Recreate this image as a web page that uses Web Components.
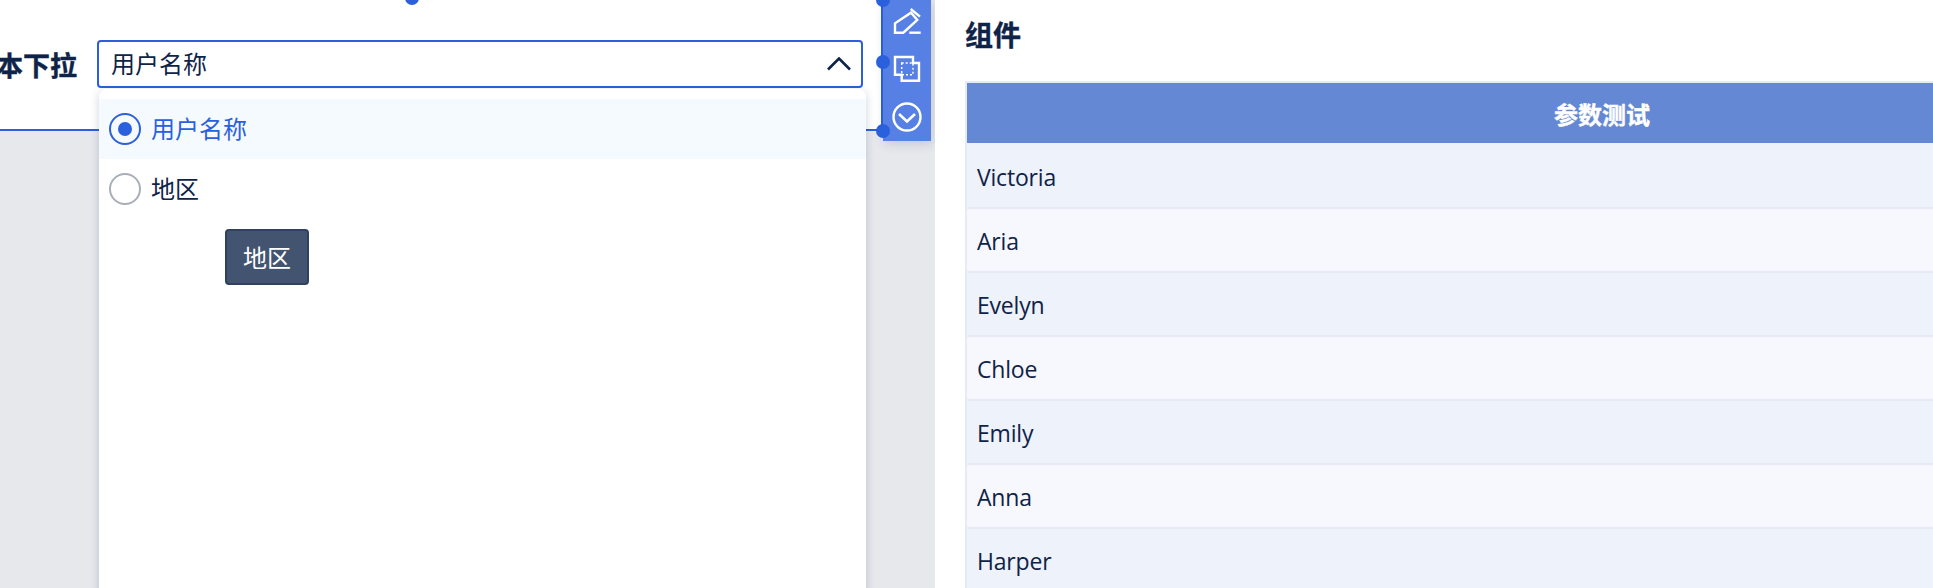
<!DOCTYPE html>
<html lang="zh">
<head>
<meta charset="utf-8">
<title>组件</title>
<style>
  html, body { margin: 0; height: 100%; overflow: hidden; background: #fff; }
  body { font-family: "Open Sans", "Noto Sans CJK SC", sans-serif; color: #0f2348; }
</style>
</head>
<body>
<app-shell>
  <form-canvas slot="canvas">
    <select-widget label="文本下拉" value="用户名称">
      <drop-option selected>用户名称</drop-option>
      <drop-option tip="地区">地区</drop-option>
    </select-widget>
  </form-canvas>
  <side-panel slot="side" heading="组件">
    <data-table heading="参数测试" rows="Victoria,Aria,Evelyn,Chloe,Emily,Anna,Harper"></data-table>
  </side-panel>
</app-shell>

<script>
class AppShell extends HTMLElement {
  constructor() {
    super();
    this.attachShadow({ mode: "open" }).innerHTML = `
      <style>
        :host { display: grid; grid-template-columns: 935px 998px; height: 588px; overflow: hidden; }
      </style>
      <slot name="canvas"></slot>
      <slot name="side"></slot>
    `;
  }
}

class FormCanvas extends HTMLElement {
  constructor() {
    super();
    this.attachShadow({ mode: "open" }).innerHTML = `
      <style>
        :host { display: block; height: 588px; background: #e6e8ec; position: relative; overflow: hidden; }
      </style>
      <slot></slot>
    `;
  }
}

class SelectWidget extends HTMLElement {
  constructor() {
    super();
    this.attachShadow({ mode: "open" }).innerHTML = `
      <style>
        :host { display: block; position: relative; width: 883px; height: 131px; box-sizing: border-box;
          background: #fff; border-right: 2px solid #2b60dc; border-bottom: 2px solid #2b60dc; }
        .row { display: flex; align-items: center; height: 48px; position: absolute; left: 0; right: 18px; top: 40px; }
        .label { width: 97px; flex: none; display: flex; justify-content: flex-end; overflow: hidden; }
        .label span { flex: none; margin-right: 20px; font-size: 27px; font-weight: 700; white-space: nowrap; -webkit-text-stroke: .4px; }
        .field { flex: 1; height: 48px; box-sizing: border-box; display: flex; align-items: center; justify-content: space-between;
          padding: 0 10px 4px 12px; border: 2px solid #2b60dc; border-radius: 4px; background: #fff; font-size: 24px; }
        .field svg { display: block; position: relative; top: 2px; }
        .list { position: absolute; left: 99px; top: 89px; width: 767px; height: 520px; padding-top: 10px; box-sizing: border-box;
          background: #fff; border-radius: 8px 8px 0 0; box-shadow: 0 2px 10px rgba(40, 60, 100, .22); z-index: 2; }
        .dot { position: absolute; width: 14px; height: 14px; margin: -7px; border-radius: 50%; background: #2b60dc; z-index: 3; }
        widget-toolbar { position: absolute; left: 883px; top: 0; }
      </style>
      <div class="row">
        <div class="label"><span></span></div>
        <div class="field">
          <span class="value"></span>
          <svg width="24" height="14" viewBox="0 0 24 14" fill="none" stroke="#0f2348" stroke-width="2.6"><path d="M1 12.5 12 1.5l11 11"/></svg>
        </div>
      </div>
      <div class="list"><slot></slot></div>
      <i class="dot" style="left:412px;top:-2px"></i>
      <i class="dot" style="left:883px;top:0"></i>
      <i class="dot" style="left:883px;top:62px"></i>
      <i class="dot" style="left:883px;top:131px"></i>
      <widget-toolbar></widget-toolbar>
    `;
  }

  connectedCallback() {
    this.shadowRoot.querySelector(".label span").textContent = this.getAttribute("label") || "";
    this.shadowRoot.querySelector(".value").textContent = this.getAttribute("value") || "";
  }
}

class WidgetToolbar extends HTMLElement {
  constructor() {
    super();
    this.attachShadow({ mode: "open" }).innerHTML = `
      <style>
        :host { display: flex; flex-direction: column; align-items: center; width: 48px; height: 141px; box-sizing: border-box;
          padding-top: 7px; gap: 19px; background: #5680e4; box-shadow: 2px 3px 10px rgba(40, 60, 100, .18); }
        svg { display: block; fill: none; stroke: #fff; stroke-width: 2.4; }
      </style>
      <svg width="30" height="28" viewBox="0 0 30 28">
        <path d="M3 25.7V16.3L19 5.7l6.3 7.3-14 12.7Z"/><path d="M18.7 2 28 9.7"/><path d="M17.3 25.7h11.4"/>
      </svg>
      <svg width="30" height="29" viewBox="0 0 30 29">
        <path d="M3 3h18v6h6v17.7H9.7v-6H3Z"/>
        <path d="M9.7 9H21v11.7H9.7Z" stroke-dasharray="2 2" stroke-width="1.4"/>
      </svg>
      <svg width="30" height="30" viewBox="0 0 30 30">
        <circle cx="15" cy="15" r="13.5"/><path d="M7 12l8 7.5 8-7.5" stroke-width="2.6"/>
      </svg>
    `;
  }
}

class DropOption extends HTMLElement {
  constructor() {
    super();
    this.attachShadow({ mode: "open" }).innerHTML = `
      <style>
        :host { display: flex; align-items: center; height: 60px; gap: 10px; padding-left: 10px; position: relative;
          font-size: 24px; color: #0f2348; }
        :host([selected]) { background: #f5faff; color: #2b60dc; }
        .radio { width: 32px; height: 32px; box-sizing: border-box; border: 2px solid #a9aeb9; border-radius: 50%;
          display: flex; align-items: center; justify-content: center; }
        :host([selected]) .radio { border-color: #2b60dc; }
        :host([selected]) .radio::after { content: ""; width: 14px; height: 14px; border-radius: 50%; background: #2b60dc; }
        .text { padding-bottom: 3px; }
        .tip { position: absolute; left: 126px; top: 70px; padding: 0 16px 2px; height: 56px; box-sizing: border-box;
          display: flex; align-items: center; color: #fff; background: #435470; border: 2px solid #2f4060; border-radius: 4px; }
        .tip:empty { display: none; }
      </style>
      <span class="radio"></span>
      <span class="text"><slot></slot></span>
      <span class="tip"></span>
    `;
  }

  connectedCallback() {
    this.shadowRoot.querySelector(".tip").textContent = this.getAttribute("tip") || "";
  }
}

class SidePanel extends HTMLElement {
  constructor() {
    super();
    this.attachShadow({ mode: "open" }).innerHTML = `
      <style>
        :host { display: block; height: 588px; box-sizing: border-box; padding: 16px 0 0 30px; background: #fff; overflow: hidden; }
        h2 { margin: 0 0 26px; font-size: 28px; line-height: 39px; font-weight: 700; color: #0f2348; -webkit-text-stroke: .4px; }
      </style>
      <h2></h2>
      <slot></slot>
    `;
  }

  connectedCallback() {
    this.shadowRoot.querySelector("h2").textContent = this.getAttribute("heading") || "";
  }
}

class DataTable extends HTMLElement {
  constructor() {
    super();
    this.attachShadow({ mode: "open" }).innerHTML = `
      <style>
        :host { display: block; width: 1274px; border: 2px solid #e6eaf5; box-sizing: border-box; border-bottom: 0; font-size: 24px; color: #0f2348; }
        .head { height: 60px; display: flex; align-items: center; justify-content: center; background: #6488d3; color: #fff; font-weight: 700; -webkit-text-stroke: .4px; }
        .cell { height: 62px; display: flex; align-items: center; padding-left: 10px; border-bottom: 2px solid #e6eaf5;
          background: #eef2fb; font-size: 23px; letter-spacing: -.2px; line-height: 1; }
        .cell:first-child { height: 64px; }
        .cell:nth-child(even) { background: #f7f8fd; }
        .cell span { position: relative; top: 1px; }
        .cell:first-child span { top: 2px; }
      </style>
      <div class="head"></div>
      <div class="body"></div>
    `;
  }

  connectedCallback() {
    this.shadowRoot.querySelector(".head").textContent = this.getAttribute("heading") || "";
    const body = this.shadowRoot.querySelector(".body");
    (this.getAttribute("rows") || "").split(",").forEach((name) => {
      const cell = document.createElement("div");
      cell.className = "cell";
      const text = document.createElement("span");
      text.textContent = name;
      cell.appendChild(text);
      body.appendChild(cell);
    });
  }
}

customElements.define("app-shell", AppShell);
customElements.define("form-canvas", FormCanvas);
customElements.define("select-widget", SelectWidget);
customElements.define("widget-toolbar", WidgetToolbar);
customElements.define("drop-option", DropOption);
customElements.define("side-panel", SidePanel);
customElements.define("data-table", DataTable);
</script>
</body>
</html>
